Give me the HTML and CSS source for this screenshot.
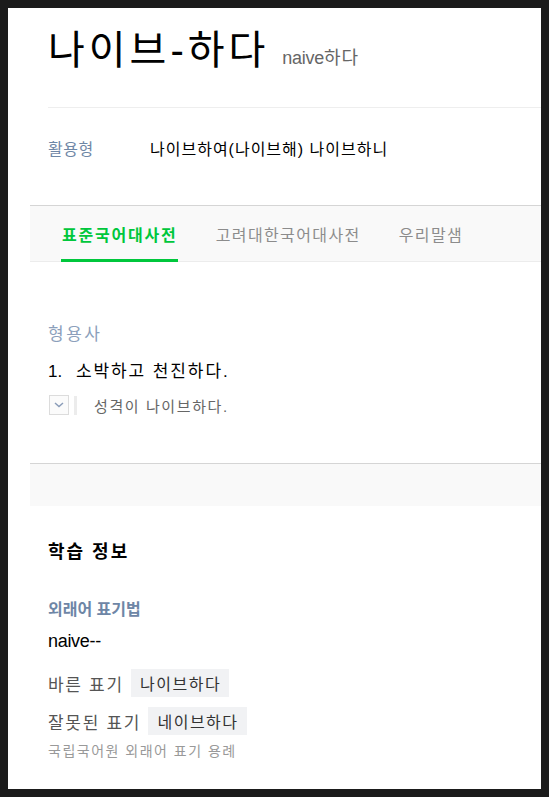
FILE: index.html
```html
<!DOCTYPE html>
<html lang="ko">
<head>
<meta charset="utf-8">
<title>나이브-하다</title>
<link rel="stylesheet" href="styles.css">
</head>
<body>
<div class="page">
  <header class="entry-head">
    <h1 class="headword">나이브-하다</h1>
    <span class="origin"><span class="latin">naive</span>하다</span>
  </header>

  <section class="conj">
    <span class="conj-label">활용형</span>
    <span class="conj-value">나이브하여(나이브해) 나이브하니</span>
  </section>

  <nav class="tabs">
    <a class="tab active">표준국어대사전</a>
    <a class="tab">고려대한국어대사전</a>
    <a class="tab">우리말샘</a>
  </nav>

  <section class="meanings">
    <div class="pos">형용사</div>
    <div class="sense"><span class="num">1.</span><span class="sense-text">소박하고 천진하다.</span></div>
    <div class="example">
      <span class="toggle"><svg width="10" height="6" viewBox="0 0 10 6"><path d="M1 1 L5 4.5 L9 1" fill="none" stroke="#8a9cb8" stroke-width="1.5"/></svg></span>
      <span class="ex-bar"></span>
      <span class="ex-text">성격이 나이브하다.</span>
    </div>
  </section>

  <div class="band"></div>

  <section class="study">
    <h2 class="study-title">학습 정보</h2>
    <h3 class="study-sub">외래어 표기법</h3>
    <div class="spelling">naive--</div>
    <div class="form-row"><span class="form-label">바른 표기</span><span class="badge">나이브하다</span></div>
    <div class="form-row second"><span class="form-label">잘못된 표기</span><span class="badge">네이브하다</span></div>
    <div class="credit">국립국어원 외래어 표기 용례</div>
  </section>
</div>
</body>
</html>
```

FILE: styles.css
```css
html {
  background: #1b1b1b;
}
body {
  margin: 8px;
  font-family: "Liberation Sans", "Noto Sans CJK KR", sans-serif;
  color: #000;
}
.page {
  background: #fff;
  height: 781px;
  overflow: hidden;
}

.entry-head {
  display: flex;
  align-items: baseline;
  gap: 13px;
  margin-left: 40px;
  padding: 18px 0 33px;
  border-bottom: 1px solid #eeeeee;
}
.headword {
  margin: 0;
  font-size: 40px;
  line-height: 48px;
  font-weight: normal;
  letter-spacing: 4px;
  color: #000;
}
.origin {
  font-size: 18px;
  color: #666;
  letter-spacing: 1px;
}
.origin .latin {
  letter-spacing: -0.3px;
}

.conj {
  display: flex;
  padding: 30px 0 43px 40px;
  font-size: 16px;
  line-height: 24px;
}
.conj-label {
  width: 102px;
  color: #6f87a6;
  letter-spacing: 0.5px;
}
.conj-value {
  color: #000;
  letter-spacing: 1px;
}

.tabs {
  display: flex;
  gap: 38px;
  margin-left: 22px;
  padding-left: 31px;
  height: 55px;
  background: #f9f9f9;
  border-top: 1px solid #d5d5d5;
  border-bottom: 1px solid #ececec;
}
.tab {
  display: flex;
  align-items: center;
  font-size: 16px;
  letter-spacing: 1.4px;
  color: #8c8c8c;
  text-decoration: none;
}
.tab.active {
  color: #00c73c;
  font-weight: bold;
  letter-spacing: 1.8px;
  box-shadow: inset 0 -3px 0 #00c73c;
  margin-bottom: -1px;
  padding: 0 0 0 1px;
}

.meanings {
  margin-left: 22px;
  padding: 61px 0 48px 18px;
  border-bottom: 1px solid #d5d5d5;
}
.pos {
  font-size: 17px;
  line-height: 24px;
  letter-spacing: 2.5px;
  color: #8c9fbb;
}
.sense {
  display: flex;
  margin-top: 12px;
  font-size: 17px;
  line-height: 26px;
}
.sense .num {
  width: 28px;
}
.sense-text {
  letter-spacing: 1.9px;
}
.example {
  display: flex;
  align-items: center;
  margin-top: 10px;
  height: 20px;
}
.toggle {
  display: flex;
  align-items: center;
  justify-content: center;
  width: 18px;
  height: 18px;
  margin-left: 1px;
  border: 1px solid #dcdcdc;
  background: #fbfbfb;
}
.ex-bar {
  width: 3px;
  height: 19px;
  margin-left: 5px;
  background: #ececec;
}
.ex-text {
  margin-left: 17px;
  font-size: 15px;
  letter-spacing: 1.6px;
  color: #666;
}

.band {
  margin-left: 22px;
  height: 42px;
  background: #f9f9f9;
}

.study {
  padding: 33px 0 0 40px;
}
.study-title {
  margin: 0;
  font-size: 18px;
  line-height: 26px;
  font-weight: bold;
  letter-spacing: 2px;
}
.study-sub {
  margin: 34px 0 0;
  font-size: 16px;
  line-height: 22px;
  font-weight: bold;
  color: #6e86a6;
}
.spelling {
  margin-top: 8px;
  font-size: 18px;
  line-height: 24px;
  letter-spacing: -0.3px;
}
.form-row {
  display: flex;
  align-items: center;
  gap: 9px;
  margin-top: 16px;
  height: 28px;
  font-size: 17px;
  letter-spacing: 1.7px;
  color: #555;
}
.form-row.second {
  margin-top: 10px;
}
.form-label {
  margin-right: -1.7px;
}
.badge {
  display: flex;
  align-items: center;
  height: 28px;
  padding: 0 8px 0 9px;
  background: #f1f2f4;
  font-size: 16px;
  letter-spacing: 1.5px;
  color: #333;
}
.credit {
  margin-top: 6px;
  font-size: 14px;
  line-height: 20px;
  letter-spacing: 1.5px;
  color: #999;
}
```
